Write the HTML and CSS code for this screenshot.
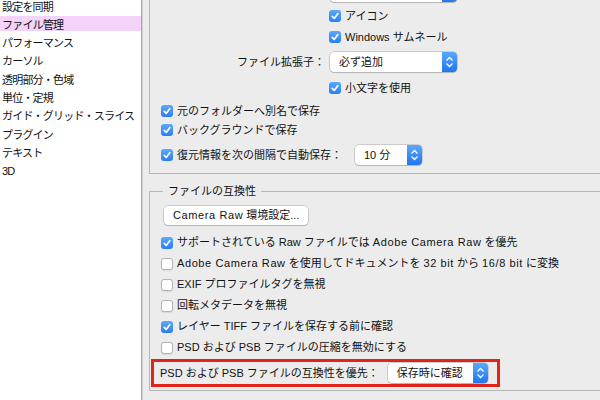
FILE: index.html
```html
<!DOCTYPE html>
<html lang="ja">
<head>
<meta charset="utf-8">
<title>環境設定 - ファイル管理</title>
<link rel="stylesheet" href="styles.css">
</head>
<body>
<div class="app">
  <nav class="sidebar">
    <div class="list">
      <div class="item">設定を同期</div>
      <div class="item active">ファイル管理</div>
      <div class="item">パフォーマンス</div>
      <div class="item">カーソル</div>
      <div class="item">透明部分・色域</div>
      <div class="item">単位・定規</div>
      <div class="item">ガイド・グリッド・スライス</div>
      <div class="item">プラグイン</div>
      <div class="item">テキスト</div>
      <div class="item">3D</div>
    </div>
  </nav>
  <main class="main">
    <div class="group g1">
      <div class="row tall">
        <span class="label"></span>
        <div class="popup w127"><span class="ptext"></span><span class="pbtn"><svg viewBox="0 0 15 20" width="15" height="20"><path d="M4.5 8.5 7.5 5.5 10.5 8.5M4.5 11.5 7.5 14.5 10.5 11.5" fill="none" stroke="#fff" stroke-width="1.3"/></svg></span></div>
      </div>
      <div class="row indent mt5"><span class="cb on"><svg viewBox="0 0 12 12" width="12" height="12"><path d="M3.2 6.3 5.2 8.4 8.9 3.6" fill="none" stroke="#fff" stroke-width="1.7" stroke-linecap="round" stroke-linejoin="round"/></svg></span><span>アイコン</span></div>
      <div class="row indent mt3"><span class="cb on"><svg viewBox="0 0 12 12" width="12" height="12"><path d="M3.2 6.3 5.2 8.4 8.9 3.6" fill="none" stroke="#fff" stroke-width="1.7" stroke-linecap="round" stroke-linejoin="round"/></svg></span><span>Windows サムネール</span></div>
      <div class="row tall mt6">
        <span class="label">ファイル拡張子：</span>
        <div class="popup w127"><span class="ptext">必ず追加</span><span class="pbtn"><svg viewBox="0 0 15 20" width="15" height="20"><path d="M4.5 8.5 7.5 5.5 10.5 8.5M4.5 11.5 7.5 14.5 10.5 11.5" fill="none" stroke="#fff" stroke-width="1.3"/></svg></span></div>
      </div>
      <div class="row indent mt7"><span class="cb on"><svg viewBox="0 0 12 12" width="12" height="12"><path d="M3.2 6.3 5.2 8.4 8.9 3.6" fill="none" stroke="#fff" stroke-width="1.7" stroke-linecap="round" stroke-linejoin="round"/></svg></span><span>小文字を使用</span></div>
      <div class="row mt5"><span class="cb on"><svg viewBox="0 0 12 12" width="12" height="12"><path d="M3.2 6.3 5.2 8.4 8.9 3.6" fill="none" stroke="#fff" stroke-width="1.7" stroke-linecap="round" stroke-linejoin="round"/></svg></span><span>元のフォルダーへ別名で保存</span></div>
      <div class="row mt1"><span class="cb on"><svg viewBox="0 0 12 12" width="12" height="12"><path d="M3.2 6.3 5.2 8.4 8.9 3.6" fill="none" stroke="#fff" stroke-width="1.7" stroke-linecap="round" stroke-linejoin="round"/></svg></span><span>バックグラウンドで保存</span></div>
      <div class="row tall mt6"><span class="cb on"><svg viewBox="0 0 12 12" width="12" height="12"><path d="M3.2 6.3 5.2 8.4 8.9 3.6" fill="none" stroke="#fff" stroke-width="1.7" stroke-linecap="round" stroke-linejoin="round"/></svg></span><span>復元情報を次の間隔で自動保存：</span>
        <div class="popup w67 gap-l"><span class="ptext">10 分</span><span class="pbtn"><svg viewBox="0 0 15 20" width="15" height="20"><path d="M4.5 8.5 7.5 5.5 10.5 8.5M4.5 11.5 7.5 14.5 10.5 11.5" fill="none" stroke="#fff" stroke-width="1.3"/></svg></span></div>
      </div>
    </div>

    <fieldset class="group g2">
      <legend>ファイルの互換性</legend>
      <button class="btn" type="button"><span class="en">Camera Raw</span> 環境設定...</button>
      <div class="row r21 mt7"><span class="cb on"><svg viewBox="0 0 12 12" width="12" height="12"><path d="M3.2 6.3 5.2 8.4 8.9 3.6" fill="none" stroke="#fff" stroke-width="1.7" stroke-linecap="round" stroke-linejoin="round"/></svg></span><span>サポートされている Raw ファイルでは <span class="en">Adobe Camera Raw</span> を優先</span></div>
      <div class="row r21"><span class="cb off"></span><span><span class="en">Adobe Camera Raw</span> を使用してドキュメントを <span class="en">32 bit</span> から <span class="en">16/8 bit</span> に変換</span></div>
      <div class="row r21"><span class="cb off"></span><span>EXIF プロファイルタグを無視</span></div>
      <div class="row r21"><span class="cb off"></span><span>回転メタデータを無視</span></div>
      <div class="row r21"><span class="cb on"><svg viewBox="0 0 12 12" width="12" height="12"><path d="M3.2 6.3 5.2 8.4 8.9 3.6" fill="none" stroke="#fff" stroke-width="1.7" stroke-linecap="round" stroke-linejoin="round"/></svg></span><span>レイヤー TIFF ファイルを保存する前に確認</span></div>
      <div class="row r21"><span class="cb off"></span><span>PSD および PSB ファイルの圧縮を無効にする</span></div>
      <div class="hl">
        <span>PSD および PSB ファイルの互換性を優先：</span>
        <div class="popup w100 gap-h"><span class="ptext">保存時に確認</span><span class="pbtn"><svg viewBox="0 0 15 20" width="15" height="20"><path d="M4.5 8.5 7.5 5.5 10.5 8.5M4.5 11.5 7.5 14.5 10.5 11.5" fill="none" stroke="#fff" stroke-width="1.3"/></svg></span></div>
      </div>
    </fieldset>
  </main>
</div>
</body>
</html>
```

FILE: styles.css
```css
* { box-sizing: border-box; }
html, body { margin: 0; height: 100%; overflow: hidden; }
body {
  font-family: "Liberation Sans", "Noto Sans CJK JP", sans-serif;
  font-size: 11px;
  line-height: 1;
  color: #111;
  background: #ececec;
}
.app { display: flex; height: 400px; }

.sidebar {
  width: 142px;
  flex: none;
  background: #fff;
  border-right: 1px solid #a8a8a8;
}
.list { margin-top: -2.5px; }
.item {
  height: 18.33px;
  line-height: 18.33px;
  padding-left: 2px;
  letter-spacing: -0.8px;
  white-space: nowrap;
}
.item.active {
  background: linear-gradient(#f4d3f8, #f4d3f8) 0 -1px / 100% 16px no-repeat;
}

.main {
  flex: 1;
  min-width: 0;
  border-left: 1px solid #d2d2d2;
  padding-left: 6px;
  overflow: hidden;
}
.group {
  width: 520px;
  border: 1px solid #b6b6b6;
}
.g1 { margin-top: -20px; padding: 1px 0 8px 11px; }
.g2 { margin: 9px 0 0; padding: 7px 0 3px 11px; min-width: 0; }
.g2 legend { margin-left: 2px; padding: 0 5px; line-height: 16px; }

.row { display: flex; align-items: center; height: 18px; white-space: nowrap; }
.row.tall { height: 20px; }
.row.r21 { height: 21px; }
.indent { padding-left: 168px; }
.mt1 { margin-top: 1px; }
.mt3 { margin-top: 3px; }
.mt5 { margin-top: 5px; }
.mt6 { margin-top: 6px; }
.mt7 { margin-top: 7px; }

.en { letter-spacing: 0.6px; }

.label { width: 164px; text-align: right; margin-right: 5px; }

.cb {
  width: 12px;
  height: 12px;
  border-radius: 3px;
  margin-right: 4px;
  flex: none;
  display: block;
}
.cb svg { display: block; }
.cb.on { background: linear-gradient(#5aa8fd, #2a7ef4); }
.cb.off {
  background: #fff;
  border: 1px solid #b3b3b3;
  box-shadow: 0 0.5px 1px rgba(0, 0, 0, 0.08);
}

.popup {
  display: flex;
  height: 20px;
  flex: none;
  background: #fff;
  border-radius: 4px;
  box-shadow: 0 0 0 0.5px rgba(0, 0, 0, 0.28), 0 1px 1px rgba(0, 0, 0, 0.12);
}
.w127 { width: 127px; }
.w67 { width: 67px; }
.w100 { width: 100px; }
.gap-l { margin-left: 13px; }
.gap-h { margin-left: 9px; }
.ptext { flex: 1; padding-left: 9px; line-height: 20px; }
.pbtn {
  width: 15px;
  flex: none;
  background: linear-gradient(#5aa8fd, #1f76ef);
  border-radius: 0 4px 4px 0;
}
.pbtn svg { display: block; }

.btn {
  display: block;
  height: 19px;
  margin-left: 3px;
  padding: 0 9px;
  font: inherit;
  color: inherit;
  background: #fff;
  border: none;
  border-radius: 4px;
  box-shadow: 0 0 0 0.5px rgba(0, 0, 0, 0.28), 0 1px 1px rgba(0, 0, 0, 0.12);
}

.hl {
  display: flex;
  align-items: center;
  width: max-content;
  height: 28px;
  margin: 1px 0 0 -10px;
  padding: 0 9px 0 6px;
  border: 3px solid #e2231a;
  white-space: nowrap;
}
```
